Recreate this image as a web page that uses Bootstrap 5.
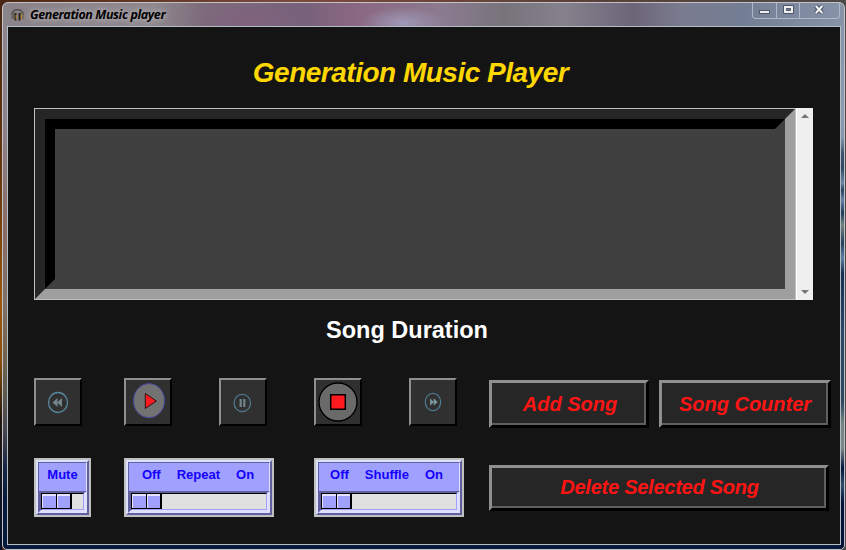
<!DOCTYPE html>
<html lang="en">
<head>
<meta charset="utf-8">
<title>Generation Music player</title>
<link href="https://cdn.jsdelivr.net/npm/bootstrap@5.3.0/dist/css/bootstrap.min.css" rel="stylesheet">
<style>
body{width:846px;height:550px;overflow:hidden;margin:0;font-family:"Liberation Sans",Arial,sans-serif;background:linear-gradient(90deg,#4a2814,#7c4a3c 35%,#5a4038 70%,#4c4a48)}
.desk{width:846px;height:550px;padding:2px 1px 0 2px;background:linear-gradient(180deg,transparent 0 20px,#6b3c0c 200px,#9a580c 300px,#8a500c 360px,#201810 420px,#04112c 100%) 0 0/2px 100% no-repeat}
.win{height:548px;border:1px solid #c5c1c6;border-radius:6px 6px 5px 5px;padding:0 3px 4px 4px;
background:
linear-gradient(180deg,#8692a6 0,#8b9bb2 110px,#8494ac 135px,#41536f 150px,#304764 165px,#6d87a8 180px,#27425f 187px,#6483a8 197px,#203a5a 210px,#75827f 222px,#25405c 240px,#5b7da4 255px,#182e50 270px,#2b4868 330px,#304860 400px,#738480 420px,#7b8988 445px,#04153c 465px,#304d6c 482px,#041238 500px,#041238) 100% 0/4px 100% no-repeat,
linear-gradient(180deg,#8b858c 0,#8c828c 120px,#8a6c66 220px,#7d7168 300px,#75664e 345px,#5d5a50 390px,#45454c 430px,#152644 465px,#071a3c 500px) 0 0/5px 100% no-repeat,
linear-gradient(#071a3c,#071a3c) 0 100%/100% 5px no-repeat,
radial-gradient(ellipse 42px 16px at 400px 20px,#9f98b8,transparent),radial-gradient(ellipse 60px 20px at 245px 18px,#80627d,transparent),
linear-gradient(90deg,#898389 0,#8f898e 150px,#7d6b7b 200px,#77617b 300px,#8a6780 350px,#8c7b90 440px,#77737b 500px,#85818c 560px,#6c6578 630px,#7b7c90 680px,#737e94 740px,#8793a8)}
.titlebar{height:23px;padding-left:3px}
.appicon{margin-top:4px}
.caption{font:italic bold 12.5px "Open Sans","Noto Sans",sans-serif;color:#000;margin:3px 0 0 5px;letter-spacing:-.4px;text-shadow:0 0 7px #bbb5bb,0 0 5px #aaa4aa}
.ctl{height:16px;border:1px solid #aeb8c8;border-top:0;border-radius:0 0 4px 4px;margin-right:1px;width:88px}
.ctl span{border-right:1px solid #aeb8c8}
.client{height:519px;background:#141414;border:1px solid #b4bcc4;padding:1px 0 0 26px}
.heading{font:italic bold 28px/32px "Liberation Sans",sans-serif;color:#ffd700;width:753px;padding-top:29px;height:80px;letter-spacing:-.5px}
.list{width:762px;height:192px;border:1px solid #c0c0c0}
.b1{height:190px;border:10px solid;border-color:#262626 #9f9f9f #9f9f9f #262626}
.b2{height:170px;border:10px solid;border-color:#000 #404040 #404040 #000;background:#404040}
.sb{width:17px;background:#efefef;border-left:1px solid #fff;padding:6px 0 5px}
.dur{font:bold 23.5px/28px "Liberation Sans",sans-serif;color:#fff;width:746px;margin-top:16px;height:62px}
.mbtn{width:48px;height:48px;border:2px solid;border-color:#8f8f8f #000 #000 #8f8f8f;background:#303030;padding:0;border-radius:0;display:block}
.mbtn svg{display:block}
.act{height:48px;padding:0;background:#262626;border:3px solid;border-color:#8f8f8f #000 #000 #8f8f8f;border-radius:0}
.act span{display:flex;align-items:center;justify-content:center;height:100%;padding:2px 0 0 4px;border:solid #5f5f5f;border-width:0 2px 2px 0;color:#ff1414;font:italic bold 20px/22px "Liberation Sans",sans-serif;white-space:nowrap}
.toggle{height:59px;border:2px solid #c0c0c0}
.t1{height:55px;border:2px solid;border-color:#dfdfff #60609f #60609f #dfdfff}
.tl{height:29px;background:#a0a0ff;border:solid;border-width:1px 1px 0 1px;border-color:#60609f #dfdfff #60609f #60609f;color:#1400ff;font:bold 13px/23px "Liberation Sans",sans-serif;gap:16px}
.t2{height:22px;border:solid;border-width:2px 3px 3px 3px;border-color:#60609f #dfdfff #dfdfff #60609f}
.trough{height:17px;background:#e0e0e0;border:1px solid;border-color:#000 #a0a0ff #a0a0ff #000}
.thumb{width:30px;height:15px;background:#000;padding:0 2px 1px 0;gap:1px}
.thumb i{flex:1;background:#a0a0ff;border:solid #e2e2ff;border-width:2px 0 0 1px}
.left{width:455px}
.players{gap:47px}
.players .mbtn:first-child{margin-right:-5px}
.toggles{gap:40px;margin-top:32px}
.tm{width:57px;margin-right:-7px}
.tw{width:150px}
.tw .tl{padding-right:2px}
.shuf .tl{padding-right:5px}
.right{margin-top:2px}
.add{width:160px;margin-right:10px}
.cnt{width:172px}
.cnt span{padding-left:2px}
.del{width:340px;height:46px;margin-top:37px}
.del span{letter-spacing:-.25px;padding:0 0 0 3px}
</style>
</head>
<body>
<div class="desk">
<div class="win">
 <header class="titlebar d-flex align-items-start">
  <svg class="appicon" width="15" height="15" viewBox="0 0 15 15"><path d="M2 8C1 1 14 1 13 8" fill="none" stroke="#55504c" stroke-width="1.5"/><path d="M3 5v7M12 5v7" stroke="#6a625c" stroke-width="3"/><path d="M5.500 6v7.500M9.500 6v7.500" stroke="#2e2618" stroke-width="2"/><path d="M6.200 8v4M11.500 7v5" stroke="#c09030"/></svg>
  <span class="caption">Generation Music player</span>
  <div class="ctl d-flex ms-auto">
   <span><svg class="d-block" width="23" height="15"><rect x="6.500" y="7.500" width="10" height="3" fill="#eee" stroke="#4e5668"/></svg></span>
   <span><svg class="d-block" width="22" height="15"><path d="M6.500 2.500h10v8h-10z" fill="#eee" stroke="#4e5668"/><path d="M9.500 5.500h4v2h-4z" fill="#79839a" stroke="#4e5668"/></svg></span>
   <svg width="38" height="15"><path d="M15.500 3l7 7M22.500 3l-7 7" stroke="#4e5668" stroke-width="4"/><path d="M15.800 3l6.500 7M22.300 3l-6.500 7" stroke="#f4f4f4" stroke-width="2"/></svg>
  </div>
 </header>
 <main class="client">
  <h1 class="heading m-0 text-center">Generation Music Player</h1>
  <div class="d-flex">
   <div class="list"><div class="b1"><div class="b2"></div></div></div>
   <div class="sb d-flex flex-column justify-content-between align-items-center">
    <svg width="8" height="5"><path d="M4 0L8 4H0z" fill="#777"/></svg><svg width="8" height="5"><path d="M0 0h8L4 4z" fill="#777"/></svg>
   </div>
  </div>
  <div class="dur text-center">Song Duration</div>
  <div class="d-flex">
   <section class="left">
    <div class="d-flex players">
     <button class="mbtn" aria-label="Previous"><svg width="44" height="44"><ellipse cx="22" cy="22.500" rx="9.500" ry="10" fill="none" stroke="#58889c" stroke-width="1.300"/><path d="M21.500 18v9l-5-4.500zM26 18v9l-5-4.500z" fill="#70848a"/></svg></button>
     <button class="mbtn" aria-label="Play"><svg width="44" height="44"><ellipse cx="23" cy="20.700" rx="15.500" ry="17.200" fill="#727272" stroke="#4545a0"/><path d="M19.300 13.500v15l11-7.500z" fill="#ff1a20" stroke="#301010"/></svg></button>
     <button class="mbtn" aria-label="Pause"><svg width="44" height="44"><ellipse cx="21.300" cy="23" rx="8.200" ry="8.600" fill="none" stroke="#50788a" stroke-width="1.300"/><path d="M19.700 19v8M23.300 19v8" stroke="#70848a" stroke-width="2.200"/></svg></button>
     <button class="mbtn" aria-label="Stop"><svg width="44" height="44"><circle cx="22" cy="22" r="19" fill="#6a6a6a" stroke="#000" stroke-width="1.400"/><path d="M14.700 14.700h14.600v14.600H14.700z" fill="#ff1a20" stroke="#000" stroke-width="1.500"/></svg></button>
     <button class="mbtn" aria-label="Next"><svg width="44" height="44"><ellipse cx="22" cy="22" rx="7.700" ry="8.600" fill="none" stroke="#4a7890" stroke-width="1.300"/><path d="M19 18.300v7.400l4-3.700zM22.700 18.300v7.400l4-3.700z" fill="#78949a"/></svg></button>
    </div>
    <div class="d-flex toggles">
     <div class="toggle tm"><div class="t1"><div class="tl text-center">Mute</div><div class="t2"><div class="trough"><div class="thumb d-flex"><i></i><i></i></div></div></div></div></div>
     <div class="toggle tw"><div class="t1"><div class="tl d-flex justify-content-center"><span>Off</span><span>Repeat</span><span>On</span></div><div class="t2"><div class="trough"><div class="thumb d-flex"><i></i><i></i></div></div></div></div></div>
     <div class="toggle tw shuf"><div class="t1"><div class="tl d-flex justify-content-center"><span>Off</span><span>Shuffle</span><span>On</span></div><div class="t2"><div class="trough"><div class="thumb d-flex"><i></i><i></i></div></div></div></div></div>
    </div>
   </section>
   <section class="right">
    <div class="d-flex">
     <button class="act add"><span>Add Song</span></button>
     <button class="act cnt"><span>Song Counter</span></button>
    </div>
    <button class="act del"><span>Delete Selected Song</span></button>
   </section>
  </div>
 </main>
</div>
</div>
<script src="https://cdn.jsdelivr.net/npm/bootstrap@5.3.0/dist/js/bootstrap.bundle.min.js"></script>
</body>
</html>
